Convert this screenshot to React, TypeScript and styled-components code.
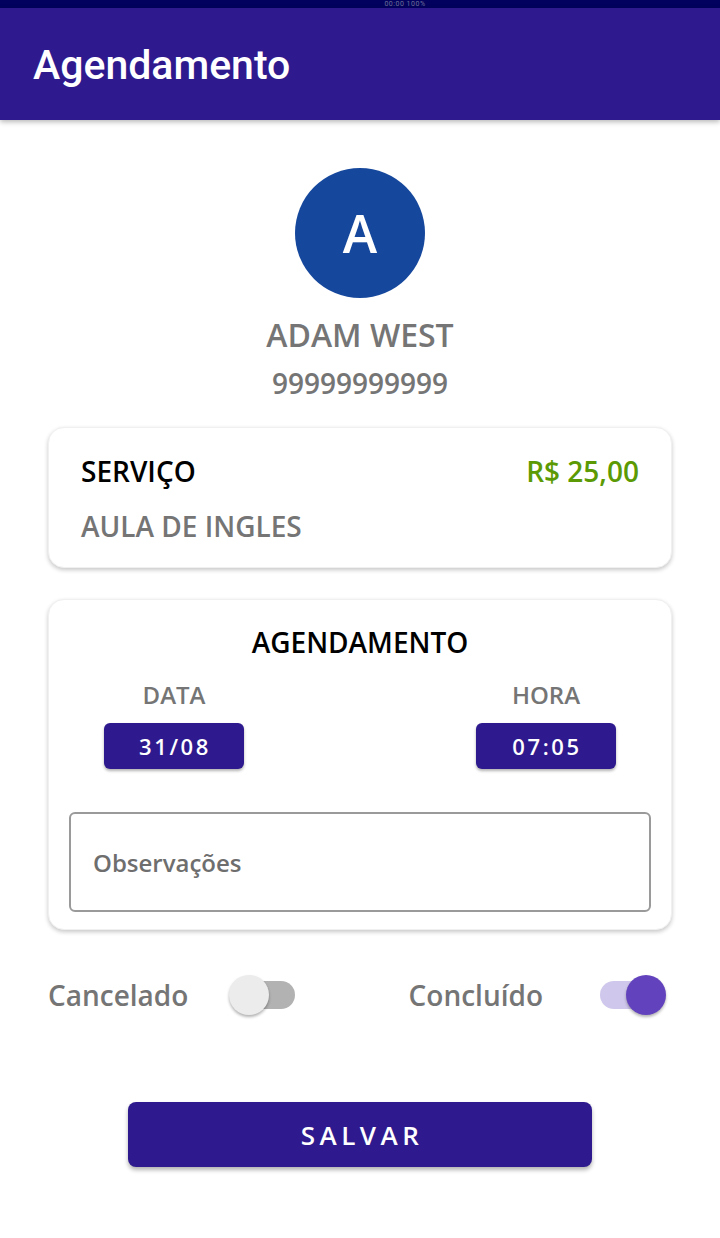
import React from "react";
import styled, { createGlobalStyle } from "styled-components";

const Global = createGlobalStyle`
  html, body { margin: 0; padding: 0; background: #ffffff; }
  body { font-family: "Open Sans", "Noto Sans", sans-serif; }
  * { box-sizing: border-box; }
`;

const PRIMARY = "#2e1a8e";
const GRAY = "#757575";

const Screen = styled.div`
  width: 720px;
  min-height: 1238px;
  background: #fff;
  display: flex;
  flex-direction: column;
`;

const StatusBar = styled.div`
  height: 8px;
  background: #02025e;
  overflow: hidden;
  display: flex;
  justify-content: center;
`;

const StatusText = styled.span`
  margin-left: 90px;
  font-family: Roboto, sans-serif;
  font-size: 7px;
  line-height: 8px;
  color: #6f6f98;
  letter-spacing: 0.5px;
`;

const AppBar = styled.header`
  height: 112px;
  background: ${PRIMARY};
  display: flex;
  align-items: center;
  padding-left: 33px;
  box-shadow: 0 2px 5px rgba(0, 0, 0, 0.28);
  position: relative;
  z-index: 1;
`;

const Title = styled.h1`
  margin: 0;
  font-family: Roboto, sans-serif;
  font-weight: 500;
  font-size: 41px;
  line-height: 46px;
  color: #ffffff;
  padding-top: 2px;
`;

const Content = styled.main`
  display: flex;
  flex-direction: column;
  align-items: stretch;
  padding: 0 48px;
`;

const Profile = styled.section`
  display: flex;
  flex-direction: column;
  align-items: center;
  padding-top: 48px;
`;

const Avatar = styled.div`
  width: 130px;
  height: 130px;
  border-radius: 50%;
  background: #15479c;
  color: #fff;
  display: flex;
  align-items: center;
  justify-content: center;
  font-size: 52px;
  font-weight: 600;
  line-height: 1;
`;

const Name = styled.div`
  margin-top: 15px;
  font-size: 32px;
  line-height: 44px;
  font-weight: 600;
  color: ${GRAY};
`;

const Phone = styled.div`
  margin-top: 6px;
  font-size: 28px;
  line-height: 40px;
  font-weight: 600;
  color: ${GRAY};
`;

const Card = styled.section<{ $mt: number; $pad: string }>`
  margin-top: ${(p) => p.$mt}px;
  background: #fff;
  border-radius: 16px;
  border: 1px solid #f0f0f0;
  box-shadow: 0 2px 4px rgba(0, 0, 0, 0.22);
  padding: ${(p) => p.$pad};
  display: flex;
  flex-direction: column;
`;

const Row = styled.div`
  display: flex;
  justify-content: space-between;
  align-items: center;
`;

const CardText = styled.div<{ $color: string; $mt?: number }>`
  font-size: 28px;
  line-height: 40px;
  font-weight: 600;
  color: ${(p) => p.$color};
  margin-top: ${(p) => p.$mt ?? 0}px;
`;

const CardTitle = styled.div`
  text-align: center;
  font-size: 28px;
  line-height: 40px;
  font-weight: 600;
  color: #000;
`;

const Pickers = styled.div`
  display: flex;
  justify-content: space-between;
  padding: 0 35px;
  margin-top: 16px;
`;

const PickerCol = styled.div`
  width: 140px;
  display: flex;
  flex-direction: column;
  align-items: center;
`;

const PickerLabel = styled.div`
  font-size: 24px;
  line-height: 34px;
  font-weight: 600;
  color: ${GRAY};
`;

const PickerButton = styled.button`
  margin-top: 11px;
  width: 140px;
  height: 46px;
  border: none;
  border-radius: 6px;
  background: ${PRIMARY};
  color: #fff;
  font-family: "Open Sans", "Noto Sans", sans-serif;
  font-size: 22px;
  font-weight: 600;
  letter-spacing: 2.6px;
  box-shadow: 0 2px 3px rgba(0, 0, 0, 0.3);
  padding: 0 0 0 2px;
`;

const NotesBox = styled.div`
  margin-top: 43px;
  height: 100px;
  border: 2px solid #9a9a9a;
  border-radius: 6px;
  display: flex;
  align-items: center;
  padding-left: 22px;
`;

const NotesPlaceholder = styled.span`
  font-size: 24px;
  font-weight: 600;
  color: #6e6e6e;
`;

const Toggles = styled.div`
  margin-top: 35px;
  height: 60px;
  display: flex;
  justify-content: space-between;
  align-items: center;
  padding-right: 6px;
`;

const ToggleGroup = styled.div<{ $gap: number }>`
  display: flex;
  align-items: center;
  gap: ${(p) => p.$gap}px;
`;

const ToggleLabel = styled.span`
  font-size: 28px;
  font-weight: 600;
  color: ${GRAY};
`;

const SwitchBox = styled.div`
  position: relative;
  width: 66px;
  height: 40px;
`;

const Track = styled.div<{ $on: boolean }>`
  position: absolute;
  top: 6px;
  height: 28px;
  left: ${(p) => (p.$on ? 0 : 4)}px;
  right: ${(p) => (p.$on ? 4 : 0)}px;
  border-radius: 14px;
  background: ${(p) => (p.$on ? "#d0c8ec" : "#b2b2b2")};
`;

const Thumb = styled.div<{ $on: boolean }>`
  position: absolute;
  top: 0;
  left: ${(p) => (p.$on ? 26 : 0)}px;
  width: 40px;
  height: 40px;
  border-radius: 50%;
  background: ${(p) => (p.$on ? "#6343bd" : "#ececec")};
  box-shadow: 0 2px 3px rgba(0, 0, 0, 0.3);
`;

const SaveButton = styled.button`
  align-self: center;
  margin-top: 77px;
  width: 464px;
  height: 65px;
  border: none;
  border-radius: 8px;
  background: ${PRIMARY};
  color: #fff;
  font-family: "Open Sans", "Noto Sans", sans-serif;
  font-size: 26px;
  font-weight: 600;
  letter-spacing: 4.5px;
  box-shadow: 0 3px 4px rgba(0, 0, 0, 0.3);
  padding: 0 0 0 4px;
`;

const Switch: React.FC<{ on: boolean }> = ({ on }) => (
  <SwitchBox>
    <Track $on={on} />
    <Thumb $on={on} />
  </SwitchBox>
);

export default function App() {
  return (
    <>
      <Global />
      <Screen>
        <StatusBar>
          <StatusText>00:00 100%</StatusText>
        </StatusBar>
        <AppBar>
          <Title>Agendamento</Title>
        </AppBar>
        <Content>
          <Profile>
            <Avatar>A</Avatar>
            <Name>ADAM WEST</Name>
            <Phone>99999999999</Phone>
          </Profile>

          <Card $mt={24} $pad="23px 32px 21px">
            <Row>
              <CardText $color="#000">SERVIÇO</CardText>
              <CardText $color="#5c9a05">R$ 25,00</CardText>
            </Row>
            <CardText $color={GRAY} $mt={15}>
              AULA DE INGLES
            </CardText>
          </Card>

          <Card $mt={31} $pad="22px 20px 17px">
            <CardTitle>AGENDAMENTO</CardTitle>
            <Pickers>
              <PickerCol>
                <PickerLabel>DATA</PickerLabel>
                <PickerButton>31/08</PickerButton>
              </PickerCol>
              <PickerCol>
                <PickerLabel>HORA</PickerLabel>
                <PickerButton>07:05</PickerButton>
              </PickerCol>
            </Pickers>
            <NotesBox>
              <NotesPlaceholder>Observações</NotesPlaceholder>
            </NotesBox>
          </Card>

          <Toggles>
            <ToggleGroup $gap={41}>
              <ToggleLabel>Cancelado</ToggleLabel>
              <Switch on={false} />
            </ToggleGroup>
            <ToggleGroup $gap={57}>
              <ToggleLabel>Concluído</ToggleLabel>
              <Switch on={true} />
            </ToggleGroup>
          </Toggles>

          <SaveButton>SALVAR</SaveButton>
        </Content>
      </Screen>
    </>
  );
}
